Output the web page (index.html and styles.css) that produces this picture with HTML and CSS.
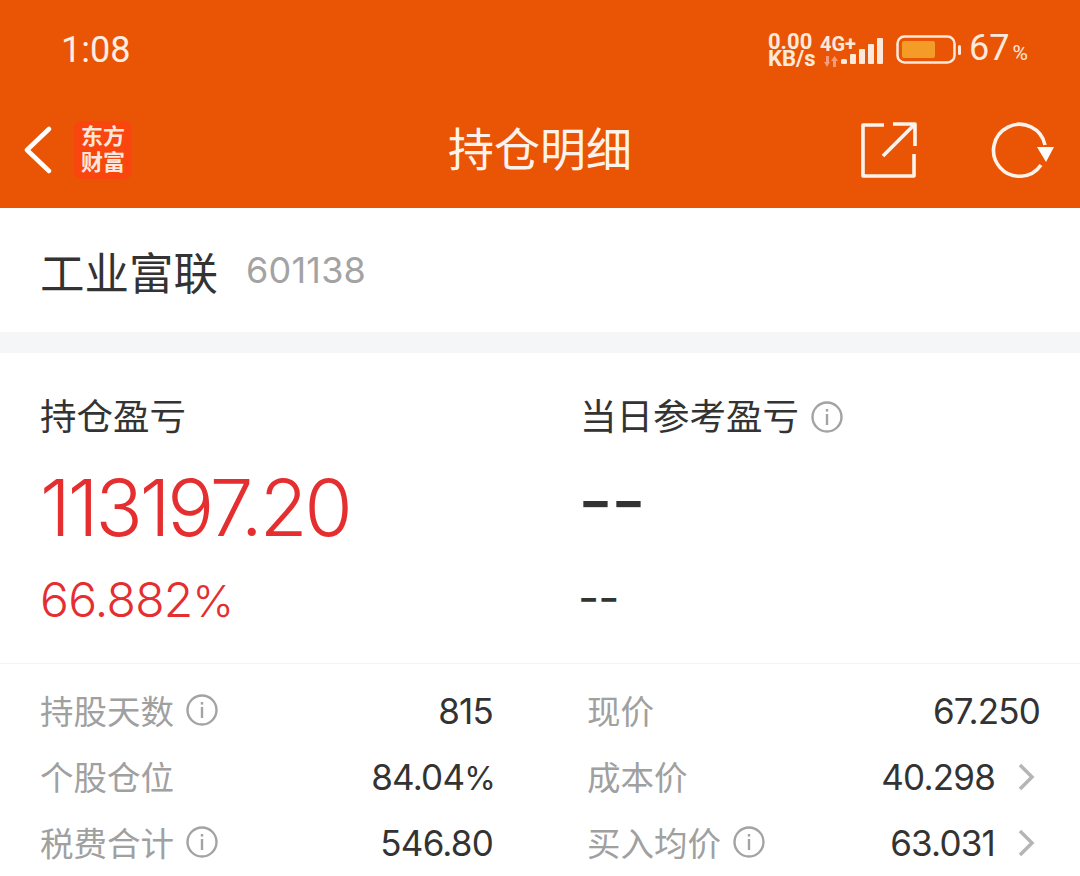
FILE: index.html
```html
<!DOCTYPE html>
<html lang="zh-CN">
<head>
  <meta charset="UTF-8">
  <title>持仓明细</title>
  <link rel="stylesheet" href="styles.css">
</head>
<body>
  <div class="page">
    <!-- Status bar + title bar -->
    <header class="top">
      <div class="status">
        <span class="time">1:08</span>
        <div class="status-right">
          <div class="speed"><div>0.00</div><div>KB/s</div></div>
          <div class="net">
            <span class="net-type">4G+</span>
            <svg class="arrows" width="14" height="11" viewBox="0 0 14 11"><path d="M2 0h3v6h1l-3 5-3-5h2zM9 11h3V5h2L10.500 0 7 5h2z" fill="#f79c7a"/></svg>
          </div>
          <svg class="signal" width="42" height="27" viewBox="0 0 42 27"><g fill="#fde9dc"><rect x="0" y="21" width="6" height="5" rx="1.500"/><rect x="9" y="16" width="6" height="10" rx="1"/><rect x="18" y="11" width="6" height="15" rx="1"/><rect x="27" y="6" width="6" height="20" rx="1"/><rect x="36" y="0" width="6" height="26" rx="1"/></g></svg>
          <svg class="battery" width="66" height="30" viewBox="0 0 66 30"><rect x="1.500" y="1.500" width="57" height="26" rx="7" fill="none" stroke="#fde9dc" stroke-width="2.500"/><rect x="6" y="6" width="33" height="17" rx="2" fill="#f39c27"/><rect x="62" y="10" width="3" height="10" rx="1.500" fill="#fde9dc"/></svg>
          <span class="pct">67<small>%</small></span>
        </div>
      </div>
      <nav class="titlebar">
        <div class="nav-left">
          <svg width="30" height="48" viewBox="0 0 30 48"><path d="M26 3 4 24l22 21" fill="none" stroke="#fff" stroke-width="4.500" stroke-linecap="round" stroke-linejoin="round"/></svg>
          <div class="logo"><div>东方</div><div>财富</div></div>
        </div>
        <h1>持仓明细</h1>
        <div class="nav-right">
          <svg width="58" height="58" viewBox="0 0 58 58"><path d="M24 4H3v51h51V33M23 35 55 3M33 3h22v22" fill="none" stroke="#fdf3ec" stroke-width="3.600" stroke-linejoin="round"/></svg>
          <svg width="64" height="58" viewBox="0 0 64 58"><path d="M50 44A26 26 0 1 1 54 24" fill="none" stroke="#fdf3ec" stroke-width="3.600"/><path d="M46 26h17l-8 15z" fill="#fff"/></svg>
        </div>
      </nav>
    </header>

    <section class="stock">
      <span class="stock-name">工业富联</span>
      <span class="stock-code">601138</span>
    </section>

    <section class="summary">
      <div class="col col-left">
        <div class="label">持仓盈亏</div>
        <div class="big red">113197.20</div>
        <div class="sub red">66.882<span class="pct-sign">%</span></div>
      </div>
      <div class="col col-right">
        <div class="label">当日参考盈亏
          <svg class="info" width="32" height="32" viewBox="0 0 32 32"><circle cx="16" cy="16" r="14.500" fill="none" stroke="#a3a3a3" stroke-width="2.400"/><rect x="14.800" y="13" width="2.400" height="11" fill="#a3a3a3"/><rect x="14.800" y="8" width="2.400" height="2.600" fill="#a3a3a3"/></svg>
        </div>
        <div class="big dash">--</div>
        <div class="sub dash">--</div>
      </div>
    </section>

    <section class="details">
      <div class="list list-left">
        <div class="row">
          <span class="key">持股天数
            <svg class="info" width="32" height="32" viewBox="0 0 32 32"><circle cx="16" cy="16" r="14.500" fill="none" stroke="#a3a3a3" stroke-width="2.400"/><rect x="14.800" y="13" width="2.400" height="11" fill="#a3a3a3"/><rect x="14.800" y="8" width="2.400" height="2.600" fill="#a3a3a3"/></svg>
          </span>
          <span class="val">815</span>
        </div>
        <div class="row">
          <span class="key">个股仓位</span>
          <span class="val val-wide">84.04<span class="pct-sign">%</span></span>
        </div>
        <div class="row">
          <span class="key">税费合计
            <svg class="info" width="32" height="32" viewBox="0 0 32 32"><circle cx="16" cy="16" r="14.500" fill="none" stroke="#a3a3a3" stroke-width="2.400"/><rect x="14.800" y="13" width="2.400" height="11" fill="#a3a3a3"/><rect x="14.800" y="8" width="2.400" height="2.600" fill="#a3a3a3"/></svg>
          </span>
          <span class="val">546.80</span>
        </div>
      </div>
      <div class="list list-right">
        <div class="row">
          <span class="key">现价</span>
          <span class="val">67.250</span>
        </div>
        <div class="row">
          <span class="key">成本价</span>
          <span class="val">40.298<svg class="chev" width="18" height="30" viewBox="0 0 18 30"><path d="M3 3l12 12L3 27" fill="none" stroke="#b5b5b5" stroke-width="3.500"/></svg></span>
        </div>
        <div class="row">
          <span class="key">买入均价
            <svg class="info" width="32" height="32" viewBox="0 0 32 32"><circle cx="16" cy="16" r="14.500" fill="none" stroke="#a3a3a3" stroke-width="2.400"/><rect x="14.800" y="13" width="2.400" height="11" fill="#a3a3a3"/><rect x="14.800" y="8" width="2.400" height="2.600" fill="#a3a3a3"/></svg>
          </span>
          <span class="val">63.031<svg class="chev" width="18" height="30" viewBox="0 0 18 30"><path d="M3 3l12 12L3 27" fill="none" stroke="#b5b5b5" stroke-width="3.500"/></svg></span>
        </div>
      </div>
    </section>
  </div>
</body>
</html>
```

FILE: styles.css
```css
* {
  box-sizing: border-box;
}
html, body {
  margin: 0;
  padding: 0;
  background: #fff;
}
body {
  font-family: Inter, "Noto Sans CJK SC", sans-serif;
  color: #333;
}
.page {
  width: 1080px;
  height: 876px;
  overflow: hidden;
}
.top {
  height: 208px;
  background: #e95504;
  color: #fff;
}
.status {
  height: 100px;
  padding: 0 52px 0 61px;
  display: flex;
  align-items: center;
  justify-content: space-between;
}
.time {
  font-family: Roboto, sans-serif;
  font-size: 36px;
  color: #fdeee3;
}
.status-right {
  display: flex;
  align-items: center;
  color: #fde9dc;
}
.speed {
  font-family: Roboto, sans-serif;
  font-size: 22px;
  line-height: 17px;
  font-weight: 700;
  width: 52px;
}
.net {
  display: flex;
  flex-direction: column;
  align-items: flex-start;
  width: 37px;
}
.net-type {
  font-family: Roboto, sans-serif;
  font-size: 20px;
  line-height: 20px;
  font-weight: 700;
}
.arrows {
  margin: 2px 0 0 4px;
}
.signal {
  margin: 3px 13px 0 -16px;
}
.battery {
  margin-right: 7px;
}
.pct {
  font-family: Roboto, sans-serif;
  font-size: 36px;
  line-height: 40px;
  width: 59px;
  white-space: nowrap;
}
.pct small {
  font-size: 21px;
  margin-left: 3px;
}
.titlebar {
  height: 108px;
  padding: 0 25px 8px 23px;
  display: flex;
  align-items: center;
  justify-content: space-between;
  position: relative;
}
.nav-left {
  display: flex;
  align-items: center;
  gap: 21px;
}
.logo {
  width: 58px;
  height: 58px;
  background: #f8460e;
  border-radius: 8px;
  font-family: "Noto Sans CJK SC", sans-serif;
  font-weight: 700;
  font-size: 22px;
  line-height: 26px;
  text-align: center;
  color: #fde6da;
}
.titlebar h1 {
  position: absolute;
  left: 0;
  right: 0;
  top: 17px;
  margin: 0;
  text-align: center;
  font-size: 46px;
  line-height: 64px;
  font-weight: 400;
  color: #fdf3ec;
}
.nav-right {
  display: flex;
  align-items: center;
  gap: 73px;
}
.stock {
  height: 124px;
  padding: 0 40px;
  display: flex;
  align-items: center;
  gap: 28px;
}
.stock-name {
  font-size: 44.500px;
  font-weight: 400;
  color: #333;
}
.stock-code {
  font-size: 36px;
  color: #a3a3a3;
  letter-spacing: 0.200px;
}
.summary {
  height: 332px;
  border-top: 21px solid #f5f6f8;
  border-bottom: 1px solid #f3f3f3;
  padding: 39px 0 0 40px;
  display: flex;
}
.col-left {
  width: 540px;
}
.col-right {
  width: 500px;
}
.label {
  font-size: 36.500px;
  line-height: 50px;
  display: flex;
  align-items: center;
  gap: 12px;
  color: #333;
}
.big {
  font-size: 78px;
  line-height: 90px;
  margin-top: 21px;
  letter-spacing: -3px;
  font-weight: 300;
}
.sub {
  font-size: 48px;
  line-height: 56px;
  margin-top: 19px;
  letter-spacing: -0.700px;
  font-weight: 300;
}
.red {
  color: #e42e30;
}
.pct-sign {
  font-size: 0.920em;
}
.dash {
  color: #333;
  font-weight: 400;
  margin-left: -2px;
}
.big.dash {
  font-size: 76px;
  letter-spacing: -2px;
  margin-top: 13px;
}
.sub.dash {
  font-size: 46px;
  letter-spacing: -1px;
  margin-top: 24px;
}
.details {
  padding: 14px 40px 0;
  display: flex;
  justify-content: space-between;
}
.list-left {
  width: 453px;
}
.list-right {
  width: 453px;
}
.row {
  height: 66px;
  display: flex;
  align-items: center;
  justify-content: space-between;
}
.key {
  display: flex;
  align-items: center;
  gap: 12px;
  font-size: 33.500px;
  color: #a0a0a0;
  padding-bottom: 3px;
}
.val {
  display: flex;
  align-items: baseline;
  font-size: 35px;
  color: #333;
  letter-spacing: -0.800px;
}
.val-wide {
  margin-right: -2px;
}
.chev {
  align-self: center;
  margin: 0 5px 0 22px;
}
```
